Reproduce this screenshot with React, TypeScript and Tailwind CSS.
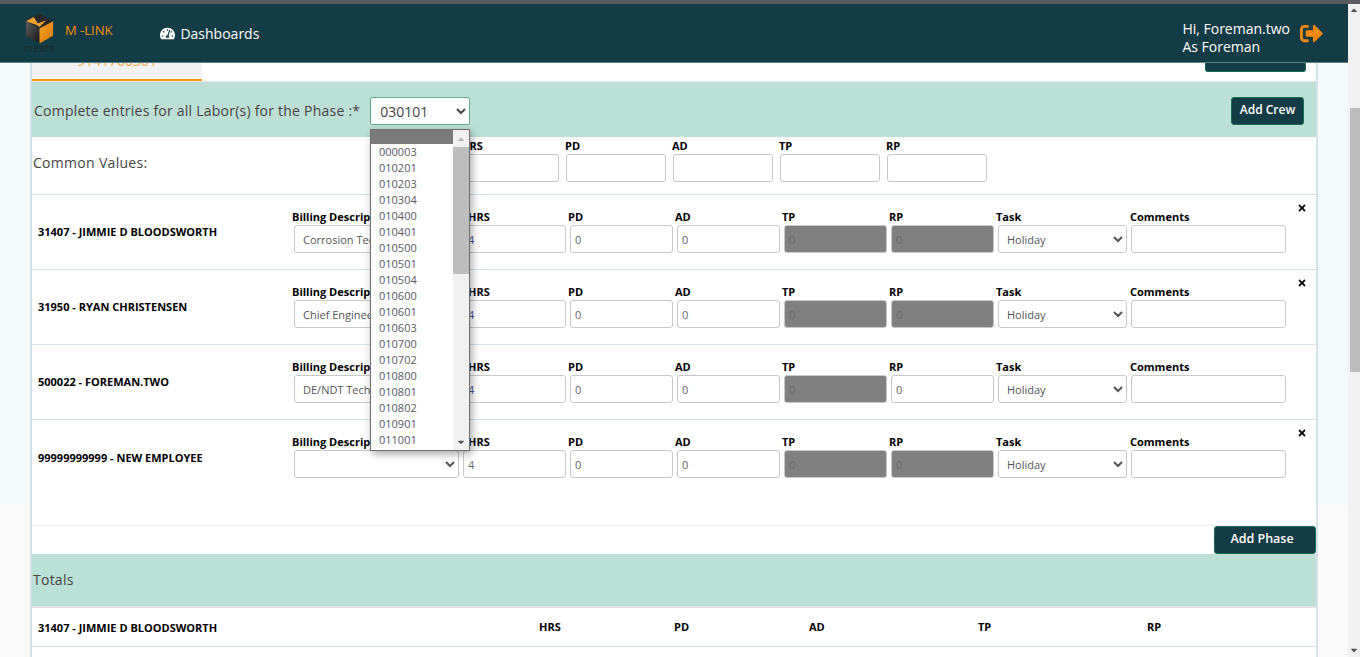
import React from 'react'
import { FaSignOutAlt, FaTachometerAlt, FaTimes, FaCaretUp, FaCaretDown } from 'react-icons/fa'

interface Employee {
  name: string
  billing: string
  rpEnabled?: boolean
  closable: boolean
  hrsClass: string
  nameClass: string
}

const employees: Employee[] = [
  { name: '31407 - JIMMIE D BLOODSWORTH', billing: 'Corrosion Technician', closable: true, hrsClass: 'text-[#4b4b8c]', nameClass: 'pt-[29px]' },
  { name: '31950 - RYAN CHRISTENSEN', billing: 'Chief Engineer', closable: true, hrsClass: 'text-[#4b4b8c]', nameClass: 'pt-[29px]' },
  { name: '500022 - FOREMAN.TWO', billing: 'DE/NDT Technician', rpEnabled: true, closable: false, hrsClass: 'text-[#4b4b8c]', nameClass: 'pt-[29px]' },
  { name: '99999999999 - NEW EMPLOYEE', billing: '', closable: true, hrsClass: 'text-[#666]', nameClass: 'pt-[30px]' },
]

const phases = [
  '000003', '010201', '010203', '010304', '010400', '010401', '010500', '010501', '010504', '010600',
  '010601', '010603', '010700', '010702', '010800', '010801', '010802', '010901', '011001',
]

function Label({ children, className = '' }: { children: React.ReactNode; className?: string }) {
  return <div className={`text-[11px] leading-[14px] font-bold text-black whitespace-nowrap ${className}`}>{children}</div>
}

function Field({ label, value, width, disabled, valueClass = 'text-[#666]', labelClass = '-ml-[2px]' }: {
  label: string
  value: string
  width: string
  disabled?: boolean
  valueClass?: string
  labelClass?: string
}) {
  return (
    <div className={width}>
      <Label className={labelClass}>{label}</Label>
      <input
        readOnly
        value={value}
        disabled={disabled}
        className={`mt-[1px] block w-full h-[28px] rounded-[3px] border border-[#c8c8c8] px-[4px] text-[11px] outline-none ${disabled ? 'bg-[#808080] text-[#6a6a6a]' : `bg-white ${valueClass}`}`}
      />
    </div>
  )
}

function SelectField({ label, value, options, width }: { label: string; value: string; options: string[]; width: string }) {
  return (
    <div className={width}>
      <Label className="-ml-[2px]">{label}</Label>
      <select
        value={value}
        onChange={() => undefined}
        className="mt-[1px] block w-full h-[28px] rounded-[3px] border border-[#c8c8c8] bg-white pl-1 text-[11px] text-[#555] outline-none"
      >
        {options.map(o => (
          <option key={o} value={o}>{o}</option>
        ))}
      </select>
    </div>
  )
}

function EmployeeRow({ employee }: { employee: Employee }) {
  return (
    <div className="flex h-[75px] border-t border-[#d5e3e8]">
      <div className={`w-[262px] pl-[6px] text-[11px] leading-[16px] font-bold text-black ${employee.nameClass}`}>
        {employee.name}
      </div>
      <div className="flex gap-[4px] pt-[15px]">
        <SelectField label="Billing Description" value={employee.billing} options={[employee.billing]} width="w-[165px]" />
        <Field label="HRS" value="4" width="w-[103px]" valueClass={employee.hrsClass} labelClass="ml-[5px]" />
        <Field label="PD" value="0" width="w-[103px]" />
        <Field label="AD" value="0" width="w-[103px]" />
        <Field label="TP" value="0" width="w-[103px]" disabled />
        <Field label="RP" value="0" width="w-[103px]" disabled={!employee.rpEnabled} />
        <SelectField label="Task" value="Holiday" options={['Holiday']} width="w-[129px]" />
        <Field label="Comments" value="" width="w-[155px]" labelClass="-ml-[1px]" />
      </div>
      {employee.closable && (
        <div className="ml-[11px] pt-[8px] text-black">
          <FaTimes className="w-[10px] h-[10px]" />
        </div>
      )}
    </div>
  )
}

function CommonField({ label, labelClass = '-ml-[1px]' }: { label: string; labelClass?: string }) {
  return (
    <div className="w-[100px]">
      <Label className={labelClass}>{label}</Label>
      <input readOnly className="mt-[1px] block w-full h-[28px] rounded-[3px] border border-[#c8c8c8] bg-white" />
    </div>
  )
}

function MearsLogo() {
  return (
    <div className="ml-[24px] w-[30px] flex flex-col items-center">
      <svg viewBox="0 0 30 31" className="w-[29px] h-[31px]">
        <defs>
          <linearGradient id="cube-left" x1="0" y1="0" x2="1" y2="1">
            <stop offset="0" stopColor="#5c5c5c" />
            <stop offset="1" stopColor="#161616" />
          </linearGradient>
          <linearGradient id="cube-right" x1="0" y1="0" x2="1" y2="1">
            <stop offset="0" stopColor="#f7a326" />
            <stop offset="1" stopColor="#d97606" />
          </linearGradient>
        </defs>
        <path d="M15 0 L29 8 L15 15 L1 8 Z" fill="#262626" />
        <path d="M1 8 L9 3.5 L15 13 Z M11 11 L22 7 L15 14 Z" fill="#f4a02b" />
        <path d="M1 8 L15 15.5 L15 31 L1 23 Z" fill="url(#cube-left)" />
        <path d="M15 15.5 L29 8 L29 23 L15 31 Z" fill="url(#cube-right)" />
      </svg>
      <span className="text-[10px] leading-[10px] tracking-[0.3px] text-[#1e262a] -mt-[1px]">mears</span>
    </div>
  )
}

function PhaseDropdown() {
  return (
    <div className="absolute left-[370px] top-[129px] w-[100px] h-[322px] flex overflow-hidden border border-[#6f6f6f] bg-white shadow-[2px_3px_8px_rgba(0,0,0,0.35)]">
      <div className="flex-1 min-w-0">
        <div className="h-[14px] bg-[#7a7a7a]" />
        {phases.map(p => (
          <div key={p} className="h-[16px] pl-[8px] text-[11px] leading-[16px] text-[#585860]">{p}</div>
        ))}
      </div>
      <div className="w-[16px] flex flex-col bg-[#f1f1f1]">
        <div className="h-[17px] flex items-center justify-center text-[#b5b5b5]">
          <FaCaretUp className="w-[10px] h-[10px]" />
        </div>
        <div className="h-[127px] bg-[#bdbdbd]" />
        <div className="flex-1" />
        <div className="h-[17px] flex items-center justify-center text-[#555]">
          <FaCaretDown className="w-[10px] h-[10px]" />
        </div>
      </div>
    </div>
  )
}

export default function App() {
  return (
    <div className="relative h-[657px] overflow-hidden flex flex-col font-['Open_Sans',sans-serif] bg-[#f1f1f1]">
      <div className="h-[4px] bg-[#5a5a5f]" />
      <div className="flex-1 min-h-0 flex">
        <div className="flex-1 min-w-0 flex flex-col bg-gradient-to-b from-[#f4fafa] from-[76.7%] to-[#fafafa] to-[76.7%]">
          <header className="h-[59px] flex items-center bg-[#143c47] border-b border-[#5d7f88]">
            <MearsLogo />
            <span className="ml-[11px] -mt-[4px] text-[13px] text-[#f5920a]">M -LINK</span>
            <FaTachometerAlt className="ml-[48px] w-[15px] h-[15px] text-white" />
            <span className="ml-[5px] text-[14px] text-white">Dashboards</span>
            <div className="ml-auto pt-[10px] text-[14px] leading-[18px] text-white">
              <div>Hi, Foreman.two</div>
              <div>As Foreman</div>
            </div>
            <FaSignOutAlt className="ml-[10px] mr-[25px] w-[23px] h-[23px] text-[#f5890c]" />
          </header>

          <main className="mx-[30px] flex-1 min-h-0 overflow-hidden border-x-2 border-[#d5e3e8] bg-white">
            <div className="flex h-[19px] justify-between border-b border-[#e5e5e5]">
              <div className="w-[170px] h-[18px] overflow-hidden border-b-2 border-[#ff9900] bg-[#f3f3f3] text-center">
                <div className="-mt-[12px] text-[14px] leading-[20px] text-[#f7a845]">9141700301</div>
              </div>
              <div className="mr-[10px] w-[101px] h-[9px] rounded-b-[3px] border border-t-0 border-[#1a6b55] bg-[#143c47]" />
            </div>

            <section className="h-[55px] flex items-center bg-[#bce0d5] pl-[2px] pr-[12px] pt-[3px]">
              <span className="mb-[2px] text-[14px] text-[#444] tracking-[0.23px]">Complete entries for all Labor(s) for the Phase :*</span>
              <select
                value="030101"
                onChange={() => undefined}
                className="ml-[10px] w-[100px] h-[28px] rounded-[2px] border border-[#5eaa90] bg-white pl-[5px] text-[14px] text-[#444] outline-none"
              >
                <option value="030101">030101</option>
              </select>
              <button className="ml-auto w-[73px] h-[28px] rounded-[3px] border border-[#1a6b55] bg-[#143c47] pb-[2px] text-[12px] font-semibold text-white">
                Add Crew
              </button>
            </section>

            <section className="flex h-[57px] pt-[2px]">
              <div className="w-[427px] pl-[1px] pt-[14px] text-[14px] leading-[20px] text-[#444] tracking-[0.3px]">Common Values:</div>
              <div className="flex gap-[7px]">
                <CommonField label="HRS" labelClass="ml-[2px]" />
                <CommonField label="PD" />
                <CommonField label="AD" />
                <CommonField label="TP" />
                <CommonField label="RP" />
              </div>
            </section>

            {employees.map(e => (
              <EmployeeRow key={e.name} employee={e} />
            ))}

            <div className="h-[32px] border-b border-[#f0f0f0]" />
            <div className="flex justify-end h-[28px]">
              <button className="w-[102px] h-[28px] rounded-[3px] border border-[#1a6b55] bg-[#143c47] pr-[6px] pb-[2px] text-[12.5px] font-semibold text-white">
                Add Phase
              </button>
            </div>

            <section className="h-[52px] flex items-center bg-[#bce0d5] pl-[1px] pb-[2px] text-[14px] tracking-[0.25px] text-[#444]">Totals</section>

            <div className="flex h-[41px] items-center border-t-2 border-b border-t-[#e5e5e5] border-b-[#d5e3e8] text-[11px] font-bold text-black">
              <div className="w-[507px] pl-[6px] pt-[2px]">31407 - JIMMIE D BLOODSWORTH</div>
              <div className="w-[135px]">HRS</div>
              <div className="w-[135px]">PD</div>
              <div className="w-[169px]">AD</div>
              <div className="w-[169px]">TP</div>
              <div>RP</div>
            </div>
          </main>
        </div>

        <div className="w-[12px] flex flex-col bg-[#f1f1f1]">
          <div className="h-[104px] flex justify-center pt-[1px] text-[#505050]">
            <FaCaretUp className="w-[10px] h-[10px]" />
          </div>
          <div className="ml-[2px] h-[264px] bg-[#bdbdbd]" />
          <div className="flex-1" />
          <div className="h-[12px] flex justify-center text-[#505050]">
            <FaCaretDown className="w-[10px] h-[10px]" />
          </div>
        </div>
      </div>
      <PhaseDropdown />
    </div>
  )
}
